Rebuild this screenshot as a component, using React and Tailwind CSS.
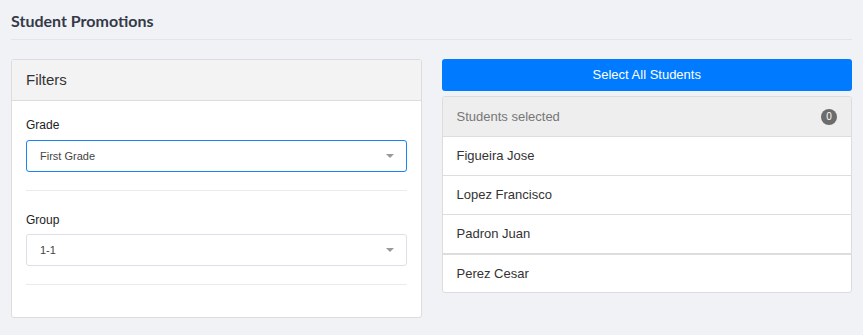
import React from 'react';

const students = ['Figueira Jose', 'Lopez Francisco', 'Padron Juan', 'Perez Cesar'];

const Caret = () => (
    <svg width="8" height="4" viewBox="0 0 8 4" className="shrink-0">
        <path d="M0 0 L8 0 L4 4 Z" fill="#999" />
    </svg>
);

const SelectBox = ({ value, focused }) => (
    <div
        className={`flex items-center justify-between h-[32px] pl-[13px] pr-[12px] bg-white rounded-[3px] border ${
            focused ? 'border-[#1a84f5]' : 'border-[#dcdfe6]'
        }`}
    >
        <span className="text-[11px] text-[#444]">{value}</span>
        <Caret />
    </div>
);

const App = () => {
    return (
        <div className="w-[863px] h-[335px] bg-[#f1f2f6] px-[11px] font-['Liberation_Sans',Arial,sans-serif] overflow-hidden">
            <div className="h-[40px] border-b border-[#e3e5ea] flex items-center">
                <h1 className="font-['Lato',sans-serif] font-bold text-[16px] text-[#343a47] pt-[3px]">Student Promotions</h1>
            </div>

            <div className="flex gap-[20px] mt-[19px]">
                {/* Filters */}
                <div className="w-[412px] h-[259px] bg-white border border-[#dcdcdc] rounded-[3px] overflow-hidden">
                    <div className="h-[41px] bg-[#f3f3f3] border-b border-[#dcdcdc] flex items-center px-[14px]">
                        <span className="text-[15px] text-[#333]">Filters</span>
                    </div>
                    <div className="px-[14px] pt-[15px]">
                        <label className="block text-[12px] text-[#222] mb-[6px]">Grade</label>
                        <SelectBox value="First Grade" focused />
                        <div className="border-t border-[#e9ebef] mt-[18px] mb-[20px]" />
                        <label className="block text-[12px] text-[#222] mb-[5px]">Group</label>
                        <SelectBox value="1-1" />
                        <div className="border-t border-[#e9ebef] mt-[18px]" />
                    </div>
                </div>

                {/* Students */}
                <div className="w-[412px]">
                    <button className="w-full h-[32px] bg-[#007bff] text-white text-[13px] rounded-[3px] flex items-center justify-center">
                        Select All Students
                    </button>
                    <div className="mt-[5px] bg-white border border-[#dcdcdc] rounded-[3px] overflow-hidden">
                        <div className="h-[39px] bg-[#eeeeee] flex items-center justify-between pl-[14px] pr-[14px]">
                            <span className="text-[13px] text-[#777]">Students selected</span>
                            <span className="w-[16px] h-[16px] rounded-full bg-[#6c6c6c] text-white text-[10px] flex items-center justify-center">0</span>
                        </div>
                        {students.map((name, i) => (
                            <div
                                key={name}
                                className={`h-[39px] flex items-center px-[14px] text-[13px] text-[#333] ${
                                    i === 3 ? 'border-t-2' : 'border-t'
                                } border-[#dddddd]`}
                            >
                                {name}
                            </div>
                        ))}
                    </div>
                </div>
            </div>
        </div>
    );
};

export default App;
